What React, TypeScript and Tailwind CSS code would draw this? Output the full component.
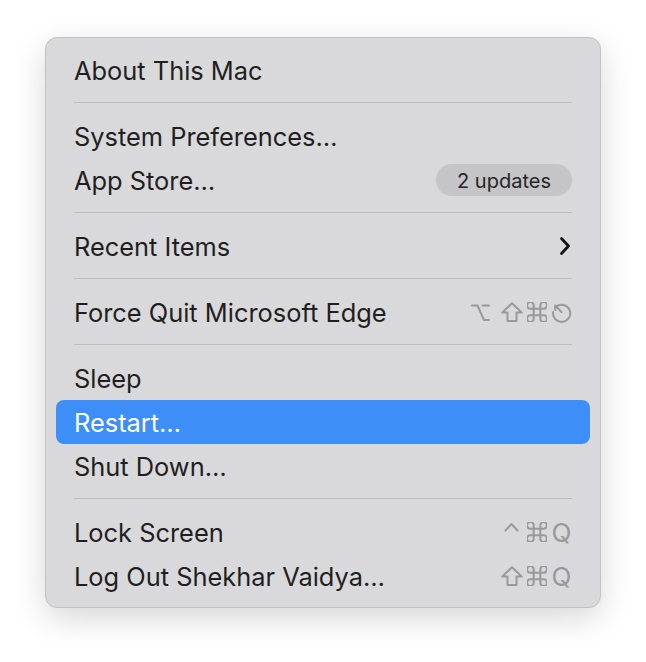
import type { ReactNode } from "react";

const font = { fontFamily: "Inter, 'Noto Sans', sans-serif" };

const stroke = {
  fill: "none",
  stroke: "currentColor",
  strokeWidth: 2,
  strokeLinecap: "round" as const,
  strokeLinejoin: "round" as const,
};

function OptionGlyph() {
  return (
    <svg width="19" height="19" viewBox="0 0 19 19" {...stroke}>
      <path d="M1 2.5h5.5l6.5 14.5h5" />
      <path d="M11.5 2.5h6.5" />
    </svg>
  );
}

function ShiftGlyph() {
  return (
    <svg width="22" height="20" viewBox="0 0 22 20" {...stroke}>
      <path d="M11 1.2 L20.8 10.6 H15.5 V19 H6.5 V10.6 H1.2 Z" />
    </svg>
  );
}

function CmdGlyph() {
  return (
    <svg width="20" height="20" viewBox="3 3 18 18" {...stroke} strokeWidth={1.85}>
      <path d="M15 6v12a3 3 0 1 0 3-3H6a3 3 0 1 0 3 3V6a3 3 0 1 0-3 3h12a3 3 0 1 0-3-3" />
    </svg>
  );
}

function EscGlyph() {
  return (
    <svg width="21" height="21" viewBox="0 0 21 21" {...stroke}>
      <path d="M5.2 4.6 A8.6 8.6 0 1 1 2.1 10" />
      <path d="M4.2 3.6 L10.5 10" />
      <path d="M4.2 3.6 L4.2 8" />
    </svg>
  );
}

function CaretGlyph() {
  return (
    <svg width="15" height="20" viewBox="0 0 15 20" {...stroke}>
      <path d="M1.5 8.5 L7.5 2 L13.5 8.5" />
    </svg>
  );
}

function Chevron() {
  return (
    <svg width="14" height="22" viewBox="0 0 14 22" fill="none" stroke="#111" strokeWidth="2.8" strokeLinecap="round" strokeLinejoin="round">
      <path d="M3.5 3.5 L10.5 11 L3.5 18.5" />
    </svg>
  );
}

function Letter({ ch }: { ch: string }) {
  return <span className="text-[26px] leading-none pt-[1px]">{ch}</span>;
}

function Key({ children, wide }: { children: ReactNode; wide?: boolean }) {
  return (
    <span className={(wide ? "w-[28px] justify-start " : "w-[25px] justify-center ") + "h-[24px] flex items-center"}>
      {children}
    </span>
  );
}

function Keys({ children }: { children: ReactNode }) {
  return <div className="flex items-center text-[#99989b] -mr-[2px]">{children}</div>;
}

function Item({ label, right, active }: { label: string; right?: ReactNode; active?: boolean }) {
  return (
    <div
      className={
        "h-[44px] px-[18px] flex items-center justify-between rounded-[8px] " +
        (active ? "bg-[#3d8ef7] text-white" : "text-[#1f1f1f]")
      }
    >
      <span className="text-[25.4px] leading-none pt-[2px]">{label}</span>
      {right}
    </div>
  );
}

function Sep() {
  return (
    <div className="h-[22px] px-[18px] pt-[10px]">
      <div className="h-px bg-[#bebdc0]" />
    </div>
  );
}

export default function App() {
  return (
    <div className="w-[646px] h-[662px] bg-white pt-[37px] pl-[45px]" style={font}>
      <div className="w-[556px] rounded-[12px] border border-[#c2c1c4] bg-[#d9d8da] pt-[10px] pb-[9px] px-[10px] shadow-[0_10px_32px_rgba(0,0,0,0.16)]">
        <Item label="About This Mac" />
        <Sep />
        <Item label="System Preferences…" />
        <Item
          label="App Store…"
          right={
            <span className="h-[32px] w-[136px] rounded-full bg-[#c5c4c7] text-[#262626] text-[20px] leading-none pt-[1px] flex items-center justify-center">
              2 updates
            </span>
          }
        />
        <Sep />
        <Item label="Recent Items" right={<Chevron />} />
        <Sep />
        <Item
          label="Force Quit Microsoft Edge"
          right={
            <Keys>
              <Key wide><OptionGlyph /></Key>
              <Key><ShiftGlyph /></Key>
              <Key><CmdGlyph /></Key>
              <Key><EscGlyph /></Key>
            </Keys>
          }
        />
        <Sep />
        <Item label="Sleep" />
        <Item label="Restart…" active />
        <Item label="Shut Down…" />
        <Sep />
        <Item
          label="Lock Screen"
          right={
            <Keys>
              <Key><CaretGlyph /></Key>
              <Key><CmdGlyph /></Key>
              <Key><Letter ch="Q" /></Key>
            </Keys>
          }
        />
        <Item
          label="Log Out Shekhar Vaidya…"
          right={
            <Keys>
              <Key><ShiftGlyph /></Key>
              <Key><CmdGlyph /></Key>
              <Key><Letter ch="Q" /></Key>
            </Keys>
          }
        />
      </div>
    </div>
  );
}
